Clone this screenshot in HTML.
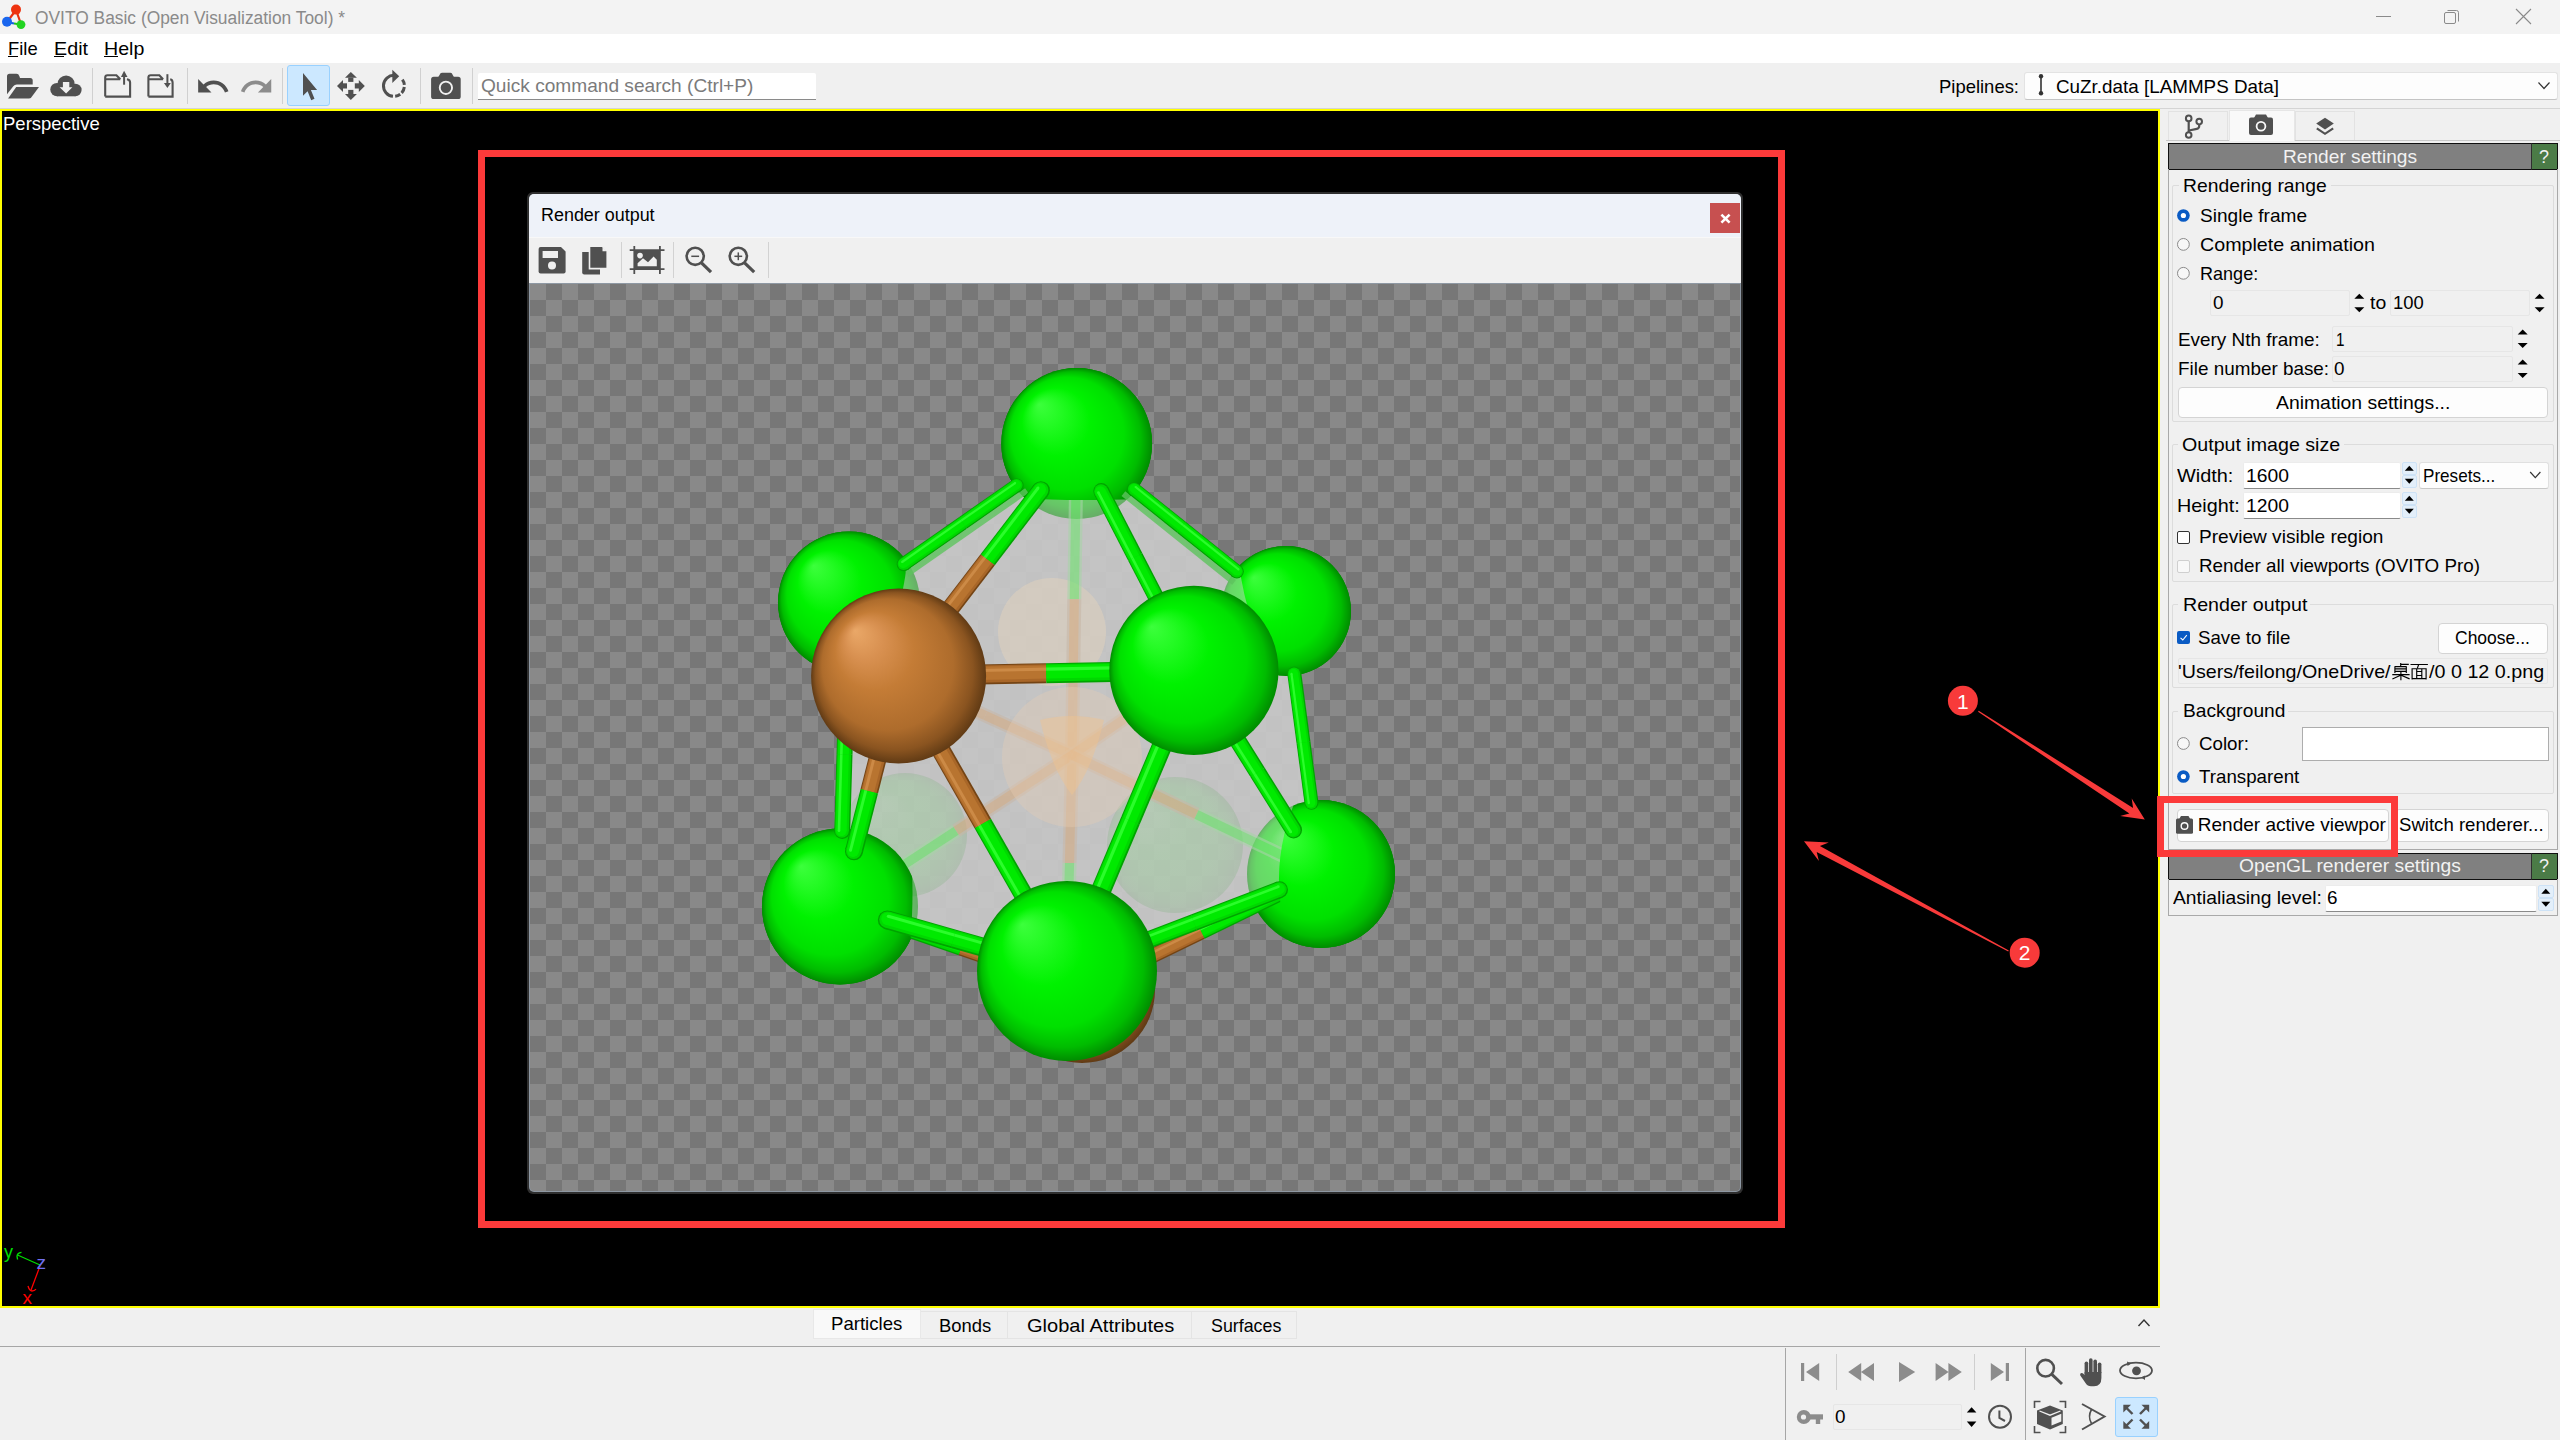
<!DOCTYPE html>
<html><head><meta charset="utf-8"><style>
html,body{margin:0;padding:0;}
body{width:2560px;height:1440px;position:relative;overflow:hidden;background:#f0f0f0;font-family:"Liberation Sans", sans-serif;}
div{box-sizing:border-box;}
svg{position:absolute;overflow:visible;}

</style></head><body>
<div style="position:absolute;left:0px;top:0px;width:2560px;height:34px;background:#f3f3f3"></div><div style="position:absolute;left:0px;top:34px;width:2560px;height:29px;background:#ffffff"></div><div style="position:absolute;left:0px;top:63px;width:2560px;height:46px;background:#f0f0f0"></div><div style="position:absolute;left:0px;top:108px;width:2560px;height:1px;background:#d4d4d4"></div><svg style="left:0px;top:0px;" width="34" height="34" viewBox="0 0 34 34">
      <line x1="16" y1="10" x2="7" y2="22" stroke="#e83010" stroke-width="2.2"/>
      <line x1="16" y1="10" x2="21" y2="24" stroke="#e83010" stroke-width="2.2"/>
      <line x1="7" y1="22" x2="14" y2="23.5" stroke="#1060e0" stroke-width="2.2"/>
      <line x1="14" y1="23.5" x2="21" y2="24.5" stroke="#20c020" stroke-width="2.2"/>
      <circle cx="16" cy="9.6" r="5" fill="#ee3310"/>
      <circle cx="7" cy="21.8" r="5" fill="#1a66ee"/>
      <circle cx="21" cy="24.6" r="4.4" fill="#22d422"/>
    </svg><div style="position:absolute;left:35.00px;top:8.56px;font-size:18px;line-height:18px;color:#8a8a8a;white-space:pre;transform:scaleX(0.9653);transform-origin:0 0;">OVITO Basic (Open Visualization Tool) *</div><svg style="left:2360px;top:0px;" width="200" height="34" viewBox="2360 0 200 34">
      <line x1="2376" y1="16.5" x2="2391" y2="16.5" stroke="#8a8a8a" stroke-width="1"/>
      <rect x="2444.5" y="12.5" width="11" height="11" rx="1.5" fill="none" stroke="#8a8a8a" stroke-width="1"/>
      <path d="M2447.5 10.5 H2456.5 Q2458.5 10.5 2458.5 12.5 V21.5" fill="none" stroke="#8a8a8a" stroke-width="1"/>
      <path d="M2516 9 L2531 24 M2531 9 L2516 24" stroke="#8a8a8a" stroke-width="1.1"/>
    </svg><div style="position:absolute;left:8.30px;top:38.82px;font-size:19px;line-height:19px;color:#000;white-space:pre;transform:scaleX(0.9665);transform-origin:0 0;">File</div><div style="position:absolute;left:54.00px;top:38.82px;font-size:19px;line-height:19px;color:#000;white-space:pre;transform:scaleX(1.0382);transform-origin:0 0;">Edit</div><div style="position:absolute;left:104.00px;top:38.82px;font-size:19px;line-height:19px;color:#000;white-space:pre;transform:scaleX(1.0313);transform-origin:0 0;">Help</div><div style="position:absolute;left:8px;top:56px;width:10px;height:1.2px;background:#000"></div><div style="position:absolute;left:54px;top:56px;width:10px;height:1.2px;background:#000"></div><div style="position:absolute;left:104px;top:56px;width:13.5px;height:1.2px;background:#000"></div><div style="position:absolute;left:92px;top:68px;width:1px;height:36px;background:#d0d0d0"></div><div style="position:absolute;left:187px;top:68px;width:1px;height:36px;background:#d0d0d0"></div><div style="position:absolute;left:282px;top:68px;width:1px;height:36px;background:#d0d0d0"></div><div style="position:absolute;left:420px;top:68px;width:1px;height:36px;background:#d0d0d0"></div><div style="position:absolute;left:472px;top:68px;width:1px;height:36px;background:#d0d0d0"></div><div style="position:absolute;left:287px;top:65px;width:43px;height:41px;background:#cce8ff;border:1px solid #99d1ff;border-radius:3px"></div><svg style="left:0px;top:60px;" width="830" height="50" viewBox="0 60 830 50">
      <!-- open folder -->
      <path d="M7 76.3 Q7 73.8 9.5 73.8 H16.5 Q18.6 73.8 19.4 76.2 L20 78.1 H30.2 Q32.7 78.1 32.7 80.6 V84.6 H16.8 Q14.6 84.6 13.3 86.3 L7 94.3 Z" fill="#505050"/>
      <path d="M16.2 86.9 H39 L31.4 97.2 Q30.4 98.5 28.8 98.5 H8.1 Z" fill="#505050"/>
      <!-- cloud download -->
      <g fill="#505050">
        <circle cx="66.1" cy="84.2" r="8.6"/>
        <circle cx="57" cy="89.6" r="6.7"/>
        <circle cx="75.4" cy="90" r="6.2"/>
        <rect x="57" y="86" width="18.5" height="10.3"/>
      </g>
      <path d="M62.9 81.9 H69.3 V87.2 H72.4 L66.1 93.5 L59.6 87.2 H62.9 Z" fill="#f0f0f0"/>
      <!-- export folder -->
      <path d="M120.3 79.2 H105.2 M105.2 96.6 V77.5 Q105.2 75.2 107.5 75.2 H116.4 L120.3 79.2 M126.9 79.2 Q130.1 79.6 130.1 82.5 V96.6 H105.2" fill="none" stroke="#505050" stroke-width="2.1"/>
      <path d="M124.1 84.7 V76" stroke="#505050" stroke-width="2"/>
      <path d="M120.9 77 L124.1 70.7 L127.5 77 Z" fill="#505050"/>
      <!-- import folder -->
      <path d="M163.1 79.2 H148.4 M148.4 96.6 V77.5 Q148.4 75.2 150.7 75.2 H159.3 L163.1 79.2 M170.2 79.2 Q172.6 79.6 172.6 82.5 V96.6 H148.4" fill="none" stroke="#505050" stroke-width="2.1"/>
      <path d="M167.4 74.2 V84" stroke="#505050" stroke-width="2"/>
      <path d="M163.9 83 H170.8 L167.4 87.9 Z" fill="#505050"/>
      <!-- undo -->
      <g transform="translate(195.2 68.7) scale(1.48)">
        <path d="M12.5 8c-2.65 0-5.05.99-6.9 2.6L2 7v9h9l-3.62-3.62c1.39-1.16 3.16-1.88 5.12-1.88 3.54 0 6.55 2.31 7.6 5.5l2.37-.78C21.08 11.03 17.15 8 12.5 8z" fill="#505050"/>
      </g>
      <!-- redo -->
      <g transform="translate(274.2 68.7) scale(-1.48 1.48)">
        <path d="M12.5 8c-2.65 0-5.05.99-6.9 2.6L2 7v9h9l-3.62-3.62c1.39-1.16 3.16-1.88 5.12-1.88 3.54 0 6.55 2.31 7.6 5.5l2.37-.78C21.08 11.03 17.15 8 12.5 8z" fill="#8c8c8c"/>
      </g>
      <!-- pointer -->
      <path d="M303 73 L303 95.8 L307.6 91.3 L311.2 100.3 L314.5 98.8 L310.9 90.1 L317.1 90.1 Z" fill="#505050"/>
      <!-- move -->
      <g fill="#505050">
        <path d="M350.8 71.9 L356.9 77.8 H345 Z"/><rect x="348.2" y="77.6" width="5.2" height="4.3"/>
        <path d="M350.8 99.9 L356.9 94 H345 Z"/><rect x="348.2" y="89.9" width="5.2" height="4.3"/>
        <path d="M337 85.9 L343 79.9 V91.9 Z"/><rect x="342.8" y="83.3" width="4.2" height="5.2"/>
        <path d="M364.8 85.9 L358.8 79.9 V91.9 Z"/><rect x="354.8" y="83.3" width="4.2" height="5.2"/>
      </g>
      <!-- rotate -->
      <path d="M392.98 96.31 A10.5 10.5 0 0 1 394.27 75.36" fill="none" stroke="#505050" stroke-width="3"/>
      <path d="M402.39 79.68 A10.5 10.5 0 0 1 404.36 84.93 M404.33 87.04 A10.5 10.5 0 0 1 401.70 92.88 M400.22 94.24 A10.5 10.5 0 0 1 395.18 96.27" fill="none" stroke="#505050" stroke-width="3"/>
      <path d="M392.3 69.7 L399.2 76.3 L392.3 82.9 Z" fill="#505050"/>
      <!-- camera -->
      <rect x="431.1" y="76.8" width="29.6" height="22.2" rx="2.6" fill="#505050"/>
      <path d="M438 77.5 L440.5 73.2 Q441 72.8 442 72.8 H450.5 Q451.4 72.8 451.8 73.2 L454.2 77.5 Z" fill="#505050"/>
      <circle cx="445.9" cy="87.8" r="6.15" fill="none" stroke="#f0f0f0" stroke-width="1.9"/>
    </svg><div style="position:absolute;left:478px;top:73px;width:338px;height:27px;background:#ffffff;border-bottom:1px solid #8a8a8a;border-radius:2px 2px 0 0"></div><div style="position:absolute;left:481.00px;top:76.32px;font-size:19px;line-height:19px;color:#7b7b7b;white-space:pre;transform:scaleX(1.0058);transform-origin:0 0;">Quick command search (Ctrl+P)</div><div style="position:absolute;left:1938.70px;top:76.72px;font-size:19px;line-height:19px;color:#000;white-space:pre;transform:scaleX(0.9710);transform-origin:0 0;">Pipelines:</div><div style="position:absolute;left:2024px;top:72px;width:534px;height:28px;background:#fdfdfd;border:1px solid #e3e3e3;border-bottom-color:#c4c4c4;border-radius:3px"></div><svg style="left:2030px;top:70px;" width="30" height="30" viewBox="2030 70 30 30">
      <line x1="2041" y1="76.5" x2="2041" y2="93" stroke="#333" stroke-width="1.6"/>
      <circle cx="2041" cy="76.3" r="2.2" fill="#333"/><circle cx="2041" cy="93.2" r="2.2" fill="#333"/>
    </svg><div style="position:absolute;left:2056.00px;top:76.72px;font-size:19px;line-height:19px;color:#000;white-space:pre;transform:scaleX(0.9915);transform-origin:0 0;">CuZr.data [LAMMPS Data]</div><svg style="left:2530px;top:75px;" width="25" height="20" viewBox="2530 75 25 20"><path d="M2538.5 82.5 L2544 88.5 L2549.5 82.5" fill="none" stroke="#333" stroke-width="1.2"/></svg><div style="position:absolute;left:0px;top:109px;width:2160px;height:1199px;background:#000;border:2px solid #ffff00"></div><div style="position:absolute;left:3.40px;top:114.12px;font-size:19px;line-height:19px;color:#ffffff;white-space:pre;transform:scaleX(0.9740);transform-origin:0 0;">Perspective</div><svg style="left:0px;top:1240px;" width="60" height="68" viewBox="0 1240 60 68">
      <line x1="40" y1="1265" x2="17.5" y2="1255" stroke="#00e000" stroke-width="1.3"/>
      <path d="M21.5 1252.3 Q17 1253 17 1256.5 L17.6 1259.5" fill="none" stroke="#00e000" stroke-width="1.3"/>
      <line x1="40" y1="1266" x2="31" y2="1290" stroke="#ff0000" stroke-width="1.3"/>
      <path d="M28 1286 Q29.5 1291 32 1291 Q34.5 1291 36 1289.2" fill="none" stroke="#ff0000" stroke-width="1.3"/>
      <text x="4" y="1258" font-family="Liberation Sans" font-size="18" fill="#00e000">y</text>
      <text x="36.6" y="1269.3" font-family="Liberation Sans" font-size="19" fill="#7070f0">z</text>
      <text x="22.6" y="1304" font-family="Liberation Sans" font-size="19" fill="#ff0000">x</text>
    </svg><div style="position:absolute;left:478px;top:150px;width:1307px;height:1078px;border:7px solid #fc3a3a"></div><div style="position:absolute;left:527px;top:192px;width:1216px;height:1002px;background:#2f2f2f;border-radius:6px"></div><div style="position:absolute;left:529px;top:194px;width:1212px;height:998px;background:#8e98a3;border-radius:5px"></div><div style="position:absolute;left:529px;top:194px;width:1212px;height:43px;background:#eef2f9;border-radius:5px 5px 0 0"></div><div style="position:absolute;left:529px;top:237px;width:1212px;height:1px;background:#f8f8f8"></div><div style="position:absolute;left:529px;top:238px;width:1212px;height:45px;background:#f0f0f0"></div><div style="position:absolute;left:541.00px;top:205.76px;font-size:18px;line-height:18px;color:#000;white-space:pre;transform:scaleX(0.9957);transform-origin:0 0;">Render output</div><div style="position:absolute;left:1710px;top:203px;width:30px;height:30px;background:#c75050"></div><svg style="left:1715px;top:208px;" width="20" height="20" viewBox="1715 208 20 20"><path d="M1721.4 214.6 L1729.6 222.6 M1729.6 214.6 L1721.4 222.6" stroke="#fff" stroke-width="2.6"/></svg><div style="position:absolute;left:621px;top:242px;width:1px;height:36px;background:#d2d2d2"></div><div style="position:absolute;left:673px;top:242px;width:1px;height:36px;background:#d2d2d2"></div><div style="position:absolute;left:768px;top:242px;width:1px;height:36px;background:#d2d2d2"></div><svg style="left:530px;top:240px;" width="240" height="40" viewBox="530 240 240 40">
      <!-- save -->
      <path d="M540.6 247 H561 L565.6 251.6 V271.5 Q565.6 273.5 563.6 273.5 H540.6 Q538.6 273.5 538.6 271.5 V249 Q538.6 247 540.6 247 Z" fill="#505050"/>
      <rect x="542.6" y="251" width="15.4" height="7" fill="#f0f0f0"/>
      <circle cx="552" cy="265.5" r="4" fill="#f0f0f0"/>
      <!-- copy -->
      <path d="M582.2 252 H600 V274.4 H584.2 Q582.2 274.4 582.2 272.4 Z" fill="#505050"/>
      <path d="M589.5 246.3 H602.5 L607.2 251 V268.6 H589.5 Z" fill="#505050" stroke="#f0f0f0" stroke-width="1.6"/>
      <path d="M602.5 246.8 V251.2 H606.8" fill="#f0f0f0"/>
      <!-- fit -->
      <g stroke="#505050" stroke-width="1.8">
        <line x1="629.7" y1="250.2" x2="664.5" y2="250.2"/>
        <line x1="629.7" y1="269.2" x2="664.5" y2="269.2"/>
        <line x1="634.3" y1="246" x2="634.3" y2="274"/>
        <line x1="659.9" y1="246" x2="659.9" y2="274"/>
      </g>
      <rect x="634.3" y="250.2" width="25.6" height="19" fill="#505050"/>
      <circle cx="640" cy="255.6" r="2.8" fill="#f0f0f0"/>
      <path d="M637.6 266.2 L637.6 263.2 L643 258.3 L648 262.2 L653.6 256.6 L656.8 259.8 L656.8 266.2 Z" fill="#f0f0f0"/>
      <!-- zoom out -->
      <circle cx="695.2" cy="256.3" r="8.6" fill="none" stroke="#505050" stroke-width="2.6"/>
      <line x1="701.5" y1="262.8" x2="711" y2="272.2" stroke="#505050" stroke-width="3.2"/>
      <line x1="691.3" y1="256.3" x2="699.1" y2="256.3" stroke="#505050" stroke-width="1.5"/>
      <!-- zoom in -->
      <circle cx="738.3" cy="256.3" r="8.6" fill="none" stroke="#505050" stroke-width="2.6"/>
      <line x1="744.6" y1="262.8" x2="754.2" y2="272.2" stroke="#505050" stroke-width="3.2"/>
      <line x1="734.4" y1="256.3" x2="742.2" y2="256.3" stroke="#505050" stroke-width="1.5"/>
      <line x1="738.3" y1="252.4" x2="738.3" y2="260.2" stroke="#505050" stroke-width="1.5"/>
    </svg><svg style="left:530px;top:284px" width="1210" height="907" shape-rendering="crispEdges">
      <defs><pattern id="chk" x="0" y="0" width="32" height="32" patternUnits="userSpaceOnUse">
        <rect width="32" height="32" fill="#777777"/>
        <rect width="16" height="16" fill="#898989"/><rect x="16" y="16" width="16" height="16" fill="#898989"/>
      </pattern>
      <clipPath id="dlgclip"><path d="M0 0 H1210 V903 Q1210 907 1206 907 H4 Q0 907 0 903 Z"/></clipPath>
      </defs>
      <rect width="1210" height="907" fill="url(#chk)" clip-path="url(#dlgclip)"/>
    </svg><svg style="left:530px;top:284px" width="1210" height="907" viewBox="530 284 1210 907"><defs>
      <radialGradient id="gG" cx="0.5" cy="0.5" r="0.5" fx="0.25" fy="0.24">
        <stop offset="0" stop-color="#3cff3c"/>
        <stop offset="0.2" stop-color="#22fa22"/>
        <stop offset="0.45" stop-color="#00f200"/>
        <stop offset="0.75" stop-color="#00e000"/>
        <stop offset="0.9" stop-color="#00bc00"/>
        <stop offset="1" stop-color="#008c00"/>
      </radialGradient>
      <radialGradient id="gB" cx="0.5" cy="0.5" r="0.5" fx="0.25" fy="0.24">
        <stop offset="0" stop-color="#eaa868"/>
        <stop offset="0.22" stop-color="#d89050"/>
        <stop offset="0.45" stop-color="#c47c36"/>
        <stop offset="0.75" stop-color="#ae6c2c"/>
        <stop offset="0.9" stop-color="#8a5420"/>
        <stop offset="1" stop-color="#603a14"/>
      </radialGradient>
      <linearGradient id="gBond" x1="0" y1="0" x2="0" y2="1"><stop offset="0" stop-color="#00ff00"/><stop offset="1" stop-color="#00c000"/></linearGradient>
      <clipPath id="capTop"><path d="M990 360 H1170 V497 Q1150 500 1076 500 Q1010 500 990 488 Z"/></clipPath>
      <clipPath id="capUL"><path d="M770 520 H903 Q912 560 900 600 Q880 660 770 700 Z"/></clipPath>
      <clipPath id="capUR"><path d="M1236 540 H1360 V690 H1290 Q1245 640 1236 540 Z"/></clipPath>
      <clipPath id="capBR"><path d="M1300 790 H1400 V960 H1296 Q1260 875 1300 790 Z"/></clipPath>
      <clipPath id="capBL"><path d="M755 820 H905 Q920 880 905 990 H755 Z"/></clipPath>
    </defs><g><circle cx="849" cy="602.5" r="71" fill="url(#gG)"/></g><g><circle cx="1286" cy="611" r="65" fill="url(#gG)"/></g><g><circle cx="1076.7" cy="443.5" r="75.4" fill="url(#gG)"/></g><g><circle cx="1321" cy="874" r="74" fill="url(#gG)"/></g><g><circle cx="840" cy="906.5" r="78" fill="url(#gG)"/></g><polygon points="1076.7,443.5 1286,611 1321,874 1067,971 840,906.5 849,602.5" fill="#cecece" fill-opacity="0.86" stroke="#cecece" stroke-opacity="0.86" stroke-width="6" stroke-linejoin="round"/><g opacity="0.42"><circle cx="849" cy="602.5" r="71" fill="url(#gG)"/></g><g opacity="0.42"><circle cx="1286" cy="611" r="65" fill="url(#gG)"/></g><g opacity="0.42"><circle cx="1076.7" cy="443.5" r="75.4" fill="url(#gG)"/></g><g opacity="0.42"><circle cx="1321" cy="874" r="74" fill="url(#gG)"/></g><g opacity="0.42"><circle cx="840" cy="906.5" r="78" fill="url(#gG)"/></g><circle cx="1052" cy="632" r="54" fill="#ecd6bc" opacity="0.4"/><g opacity="0.1"><circle cx="905" cy="835" r="62" fill="url(#gG)"/></g><g opacity="0.1"><circle cx="1175" cy="845" r="68" fill="url(#gG)"/></g><g opacity="0.6"><line x1="1076.7" y1="443.5" x2="1074.3" y2="599.2" stroke="#a8d4a8" stroke-width="14.0"/><line x1="1074.3" y1="599.2" x2="1072.0" y2="755.0" stroke="#c8b8a8" stroke-width="14.0"/><line x1="1076.7" y1="443.5" x2="1074.3" y2="599.2" stroke="#6ee46e" stroke-width="9.2"/><line x1="1074.3" y1="599.2" x2="1072.0" y2="755.0" stroke="#d4aa80" stroke-width="9.2"/></g><g opacity="0.6"><line x1="1072.0" y1="755.0" x2="985.3" y2="715.5" stroke="#c8b8a8" stroke-width="14.0"/><line x1="985.3" y1="715.5" x2="898.6" y2="676.0" stroke="#c8b8a8" stroke-width="14.0"/><line x1="1072.0" y1="755.0" x2="985.3" y2="715.5" stroke="#d4aa80" stroke-width="9.2"/><line x1="985.3" y1="715.5" x2="898.6" y2="676.0" stroke="#d4aa80" stroke-width="9.2"/></g><g opacity="0.6"><line x1="1072.0" y1="755.0" x2="1133.0" y2="712.7" stroke="#c8b8a8" stroke-width="14.0"/><line x1="1133.0" y1="712.7" x2="1193.9" y2="670.4" stroke="#a8d4a8" stroke-width="14.0"/><line x1="1072.0" y1="755.0" x2="1133.0" y2="712.7" stroke="#d4aa80" stroke-width="9.2"/><line x1="1133.0" y1="712.7" x2="1193.9" y2="670.4" stroke="#6ee46e" stroke-width="9.2"/></g><g opacity="0.6"><line x1="1072.0" y1="755.0" x2="1069.5" y2="863.0" stroke="#c8b8a8" stroke-width="14.0"/><line x1="1069.5" y1="863.0" x2="1067.0" y2="971.0" stroke="#a8d4a8" stroke-width="14.0"/><line x1="1072.0" y1="755.0" x2="1069.5" y2="863.0" stroke="#d4aa80" stroke-width="9.2"/><line x1="1069.5" y1="863.0" x2="1067.0" y2="971.0" stroke="#6ee46e" stroke-width="9.2"/></g><g opacity="0.6"><line x1="1072.0" y1="755.0" x2="956.0" y2="830.8" stroke="#c8b8a8" stroke-width="14.0"/><line x1="956.0" y1="830.8" x2="840.0" y2="906.5" stroke="#a8d4a8" stroke-width="14.0"/><line x1="1072.0" y1="755.0" x2="956.0" y2="830.8" stroke="#d4aa80" stroke-width="9.2"/><line x1="956.0" y1="830.8" x2="840.0" y2="906.5" stroke="#6ee46e" stroke-width="9.2"/></g><g opacity="0.6"><line x1="1072.0" y1="755.0" x2="1196.5" y2="814.5" stroke="#c8b8a8" stroke-width="14.0"/><line x1="1196.5" y1="814.5" x2="1321.0" y2="874.0" stroke="#a8d4a8" stroke-width="14.0"/><line x1="1072.0" y1="755.0" x2="1196.5" y2="814.5" stroke="#d4aa80" stroke-width="9.2"/><line x1="1196.5" y1="814.5" x2="1321.0" y2="874.0" stroke="#6ee46e" stroke-width="9.2"/></g><circle cx="1072" cy="757" r="70" fill="#e8cfb4" opacity="0.35"/><path d="M1040 720 Q1072 712 1104 720 Q1092 770 1072 795 Q1052 770 1040 720 Z" fill="#f0c490" opacity="0.45"/><g><line x1="1082.0" y1="990.0" x2="1201.5" y2="932.0" stroke="#744414" stroke-width="15.0"/><line x1="1201.5" y1="932.0" x2="1321.0" y2="874.0" stroke="#00a400" stroke-width="15.0"/><line x1="1081.9" y1="989.7" x2="1201.4" y2="931.7" stroke="#a86628" stroke-width="12.9"/><line x1="1201.4" y1="931.7" x2="1320.9" y2="873.7" stroke="#00d800" stroke-width="12.9"/><line x1="1081.6" y1="989.2" x2="1201.1" y2="931.2" stroke="#b87430" stroke-width="9.9"/><line x1="1201.1" y1="931.2" x2="1320.6" y2="873.2" stroke="#00ea00" stroke-width="9.9"/><line x1="1080.7" y1="987.3" x2="1200.2" y2="929.3" stroke="#cc8a46" stroke-width="2.4"/><line x1="1200.2" y1="929.3" x2="1319.7" y2="871.3" stroke="#2cfc2c" stroke-width="2.4"/></g><g><line x1="1082.0" y1="990.0" x2="961.0" y2="948.2" stroke="#744414" stroke-width="15.0"/><line x1="961.0" y1="948.2" x2="840.0" y2="906.5" stroke="#00a400" stroke-width="15.0"/><line x1="1082.1" y1="989.7" x2="961.1" y2="948.0" stroke="#a86628" stroke-width="12.9"/><line x1="961.1" y1="948.0" x2="840.1" y2="906.2" stroke="#00d800" stroke-width="12.9"/><line x1="1082.3" y1="989.1" x2="961.3" y2="947.4" stroke="#b87430" stroke-width="9.9"/><line x1="961.3" y1="947.4" x2="840.3" y2="905.6" stroke="#00ea00" stroke-width="9.9"/><line x1="1083.0" y1="987.2" x2="962.0" y2="945.4" stroke="#cc8a46" stroke-width="2.4"/><line x1="962.0" y1="945.4" x2="841.0" y2="903.7" stroke="#2cfc2c" stroke-width="2.4"/></g><g clip-path="url(#capTop)"><circle cx="1076.7" cy="443.5" r="75.4" fill="url(#gG)"/></g><g clip-path="url(#capUL)"><circle cx="849" cy="602.5" r="71" fill="url(#gG)"/></g><g clip-path="url(#capUR)"><circle cx="1286" cy="611" r="65" fill="url(#gG)"/></g><g clip-path="url(#capBR)"><circle cx="1321" cy="874" r="74" fill="url(#gG)"/></g><g clip-path="url(#capBL)"><circle cx="840" cy="906.5" r="78" fill="url(#gG)"/></g><line x1="1026.8" y1="490.6" x2="907.1" y2="574.1" stroke="#5ec45e" stroke-width="6" opacity="0.8"/><line x1="1123.4" y1="493.7" x2="1234.1" y2="582.3" stroke="#5ec45e" stroke-width="6" opacity="0.8"/><g><line x1="1016.7" y1="485.4" x2="962.9" y2="523.0" stroke="#00a400" stroke-width="14.0"/><circle cx="1016.7" cy="485.4" r="7.0" fill="#00a400"/><line x1="962.9" y1="523.0" x2="903.7" y2="564.3" stroke="#00a400" stroke-width="14.0"/><circle cx="903.7" cy="564.3" r="7.0" fill="#00a400"/><line x1="1016.6" y1="485.1" x2="962.7" y2="522.8" stroke="#00d800" stroke-width="12.0"/><circle cx="1016.6" cy="485.1" r="6.0" fill="#00d800"/><line x1="962.7" y1="522.8" x2="903.6" y2="564.1" stroke="#00d800" stroke-width="12.0"/><circle cx="903.6" cy="564.1" r="6.0" fill="#00d800"/><line x1="1016.3" y1="484.7" x2="962.4" y2="522.3" stroke="#00ea00" stroke-width="9.2"/><circle cx="1016.3" cy="484.7" r="4.6" fill="#00ea00"/><line x1="962.4" y1="522.3" x2="903.2" y2="563.6" stroke="#00ea00" stroke-width="9.2"/><circle cx="903.2" cy="563.6" r="4.6" fill="#00ea00"/><line x1="1015.1" y1="483.1" x2="961.2" y2="520.7" stroke="#2cfc2c" stroke-width="2.2"/><circle cx="1015.1" cy="483.1" r="1.1" fill="#2cfc2c"/><line x1="961.2" y1="520.7" x2="902.1" y2="562.0" stroke="#2cfc2c" stroke-width="2.2"/><circle cx="902.1" cy="562.0" r="1.1" fill="#2cfc2c"/></g><g><line x1="1133.8" y1="489.2" x2="1181.3" y2="527.2" stroke="#00a400" stroke-width="14.0"/><circle cx="1133.8" cy="489.2" r="7.0" fill="#00a400"/><line x1="1181.3" y1="527.2" x2="1236.8" y2="571.6" stroke="#00a400" stroke-width="14.0"/><circle cx="1236.8" cy="571.6" r="7.0" fill="#00a400"/><line x1="1134.0" y1="489.0" x2="1181.5" y2="527.0" stroke="#00d800" stroke-width="12.0"/><circle cx="1134.0" cy="489.0" r="6.0" fill="#00d800"/><line x1="1181.5" y1="527.0" x2="1236.9" y2="571.4" stroke="#00d800" stroke-width="12.0"/><circle cx="1236.9" cy="571.4" r="6.0" fill="#00d800"/><line x1="1134.3" y1="488.5" x2="1181.9" y2="526.6" stroke="#00ea00" stroke-width="9.2"/><circle cx="1134.3" cy="488.5" r="4.6" fill="#00ea00"/><line x1="1181.9" y1="526.6" x2="1237.3" y2="570.9" stroke="#00ea00" stroke-width="9.2"/><circle cx="1237.3" cy="570.9" r="4.6" fill="#00ea00"/><line x1="1135.6" y1="487.0" x2="1183.1" y2="525.1" stroke="#2cfc2c" stroke-width="2.2"/><circle cx="1135.6" cy="487.0" r="1.1" fill="#2cfc2c"/><line x1="1183.1" y1="525.1" x2="1238.5" y2="569.4" stroke="#2cfc2c" stroke-width="2.2"/><circle cx="1238.5" cy="569.4" r="1.1" fill="#2cfc2c"/></g><g><line x1="1040.9" y1="490.2" x2="987.7" y2="559.8" stroke="#00a400" stroke-width="18.0"/><circle cx="1040.9" cy="490.2" r="9.0" fill="#00a400"/><line x1="987.7" y1="559.8" x2="898.6" y2="676.0" stroke="#744414" stroke-width="18.0"/><line x1="1040.7" y1="490.0" x2="987.4" y2="559.5" stroke="#00d800" stroke-width="15.5"/><circle cx="1040.7" cy="490.0" r="7.7" fill="#00d800"/><line x1="987.4" y1="559.5" x2="898.3" y2="675.8" stroke="#a86628" stroke-width="15.5"/><line x1="1040.1" y1="489.5" x2="986.8" y2="559.1" stroke="#00ea00" stroke-width="11.9"/><circle cx="1040.1" cy="489.5" r="5.9" fill="#00ea00"/><line x1="986.8" y1="559.1" x2="897.7" y2="675.3" stroke="#b87430" stroke-width="11.9"/><line x1="1038.1" y1="488.0" x2="984.8" y2="557.6" stroke="#2cfc2c" stroke-width="2.9"/><circle cx="1038.1" cy="488.0" r="1.4" fill="#2cfc2c"/><line x1="984.8" y1="557.6" x2="895.7" y2="673.8" stroke="#cc8a46" stroke-width="2.9"/></g><g><line x1="1101.3" y1="491.1" x2="1135.3" y2="557.0" stroke="#00a400" stroke-width="16.0"/><circle cx="1101.3" cy="491.1" r="8.0" fill="#00a400"/><line x1="1135.3" y1="557.0" x2="1193.9" y2="670.4" stroke="#00a400" stroke-width="16.0"/><line x1="1101.0" y1="491.2" x2="1135.0" y2="557.1" stroke="#00d800" stroke-width="13.8"/><circle cx="1101.0" cy="491.2" r="6.9" fill="#00d800"/><line x1="1135.0" y1="557.1" x2="1193.6" y2="670.5" stroke="#00d800" stroke-width="13.8"/><line x1="1100.4" y1="491.5" x2="1134.4" y2="557.4" stroke="#00ea00" stroke-width="10.6"/><circle cx="1100.4" cy="491.5" r="5.3" fill="#00ea00"/><line x1="1134.4" y1="557.4" x2="1193.0" y2="670.8" stroke="#00ea00" stroke-width="10.6"/><line x1="1098.4" y1="492.5" x2="1132.5" y2="558.4" stroke="#2cfc2c" stroke-width="2.6"/><circle cx="1098.4" cy="492.5" r="1.3" fill="#2cfc2c"/><line x1="1132.5" y1="558.4" x2="1191.1" y2="671.9" stroke="#2cfc2c" stroke-width="2.6"/></g><g><line x1="847.0" y1="671.3" x2="844.5" y2="754.5" stroke="#00a400" stroke-width="16.0"/><circle cx="847.0" cy="671.3" r="8.0" fill="#00a400"/><line x1="844.5" y1="754.5" x2="842.2" y2="830.9" stroke="#00a400" stroke-width="16.0"/><circle cx="842.2" cy="830.9" r="8.0" fill="#00a400"/><line x1="846.6" y1="671.3" x2="844.2" y2="754.5" stroke="#00d800" stroke-width="13.8"/><circle cx="846.6" cy="671.3" r="6.9" fill="#00d800"/><line x1="844.2" y1="754.5" x2="841.9" y2="830.9" stroke="#00d800" stroke-width="13.8"/><circle cx="841.9" cy="830.9" r="6.9" fill="#00d800"/><line x1="846.0" y1="671.3" x2="843.5" y2="754.5" stroke="#00ea00" stroke-width="10.6"/><circle cx="846.0" cy="671.3" r="5.3" fill="#00ea00"/><line x1="843.5" y1="754.5" x2="841.3" y2="830.8" stroke="#00ea00" stroke-width="10.6"/><circle cx="841.3" cy="830.8" r="5.3" fill="#00ea00"/><line x1="843.8" y1="671.2" x2="841.3" y2="754.4" stroke="#2cfc2c" stroke-width="2.6"/><circle cx="843.8" cy="671.2" r="1.3" fill="#2cfc2c"/><line x1="841.3" y1="754.4" x2="839.0" y2="830.8" stroke="#2cfc2c" stroke-width="2.6"/><circle cx="839.0" cy="830.8" r="1.3" fill="#2cfc2c"/></g><g><line x1="1294.3" y1="673.5" x2="1303.5" y2="742.5" stroke="#00a400" stroke-width="14.0"/><circle cx="1294.3" cy="673.5" r="7.0" fill="#00a400"/><line x1="1303.5" y1="742.5" x2="1311.5" y2="802.8" stroke="#00a400" stroke-width="14.0"/><circle cx="1311.5" cy="802.8" r="7.0" fill="#00a400"/><line x1="1294.0" y1="673.5" x2="1303.2" y2="742.5" stroke="#00d800" stroke-width="12.0"/><circle cx="1294.0" cy="673.5" r="6.0" fill="#00d800"/><line x1="1303.2" y1="742.5" x2="1311.3" y2="802.9" stroke="#00d800" stroke-width="12.0"/><circle cx="1311.3" cy="802.9" r="6.0" fill="#00d800"/><line x1="1293.5" y1="673.6" x2="1302.7" y2="742.6" stroke="#00ea00" stroke-width="9.2"/><circle cx="1293.5" cy="673.6" r="4.6" fill="#00ea00"/><line x1="1302.7" y1="742.6" x2="1310.7" y2="803.0" stroke="#00ea00" stroke-width="9.2"/><circle cx="1310.7" cy="803.0" r="4.6" fill="#00ea00"/><line x1="1291.5" y1="673.9" x2="1300.7" y2="742.9" stroke="#2cfc2c" stroke-width="2.2"/><circle cx="1291.5" cy="673.9" r="1.1" fill="#2cfc2c"/><line x1="1300.7" y1="742.9" x2="1308.8" y2="803.2" stroke="#2cfc2c" stroke-width="2.2"/><circle cx="1308.8" cy="803.2" r="1.1" fill="#2cfc2c"/></g><g><line x1="898.6" y1="676.0" x2="869.3" y2="791.2" stroke="#744414" stroke-width="18.0"/><line x1="869.3" y1="791.2" x2="854.0" y2="851.3" stroke="#00a400" stroke-width="18.0"/><circle cx="854.0" cy="851.3" r="9.0" fill="#00a400"/><line x1="898.3" y1="675.9" x2="869.0" y2="791.2" stroke="#a86628" stroke-width="15.5"/><line x1="869.0" y1="791.2" x2="853.7" y2="851.2" stroke="#00d800" stroke-width="15.5"/><circle cx="853.7" cy="851.2" r="7.7" fill="#00d800"/><line x1="897.6" y1="675.7" x2="868.3" y2="791.0" stroke="#b87430" stroke-width="11.9"/><line x1="868.3" y1="791.0" x2="853.0" y2="851.0" stroke="#00ea00" stroke-width="11.9"/><circle cx="853.0" cy="851.0" r="5.9" fill="#00ea00"/><line x1="895.1" y1="675.1" x2="865.8" y2="790.4" stroke="#cc8a46" stroke-width="2.9"/><line x1="865.8" y1="790.4" x2="850.5" y2="850.4" stroke="#2cfc2c" stroke-width="2.9"/><circle cx="850.5" cy="850.4" r="1.4" fill="#2cfc2c"/></g><g><line x1="1193.9" y1="670.4" x2="1257.5" y2="772.2" stroke="#00a400" stroke-width="17.0"/><line x1="1257.5" y1="772.2" x2="1293.6" y2="830.1" stroke="#00a400" stroke-width="17.0"/><circle cx="1293.6" cy="830.1" r="8.5" fill="#00a400"/><line x1="1193.6" y1="670.6" x2="1257.2" y2="772.4" stroke="#00d800" stroke-width="14.6"/><line x1="1257.2" y1="772.4" x2="1293.3" y2="830.2" stroke="#00d800" stroke-width="14.6"/><circle cx="1293.3" cy="830.2" r="7.3" fill="#00d800"/><line x1="1193.0" y1="670.9" x2="1256.6" y2="772.7" stroke="#00ea00" stroke-width="11.2"/><line x1="1256.6" y1="772.7" x2="1292.7" y2="830.6" stroke="#00ea00" stroke-width="11.2"/><circle cx="1292.7" cy="830.6" r="5.6" fill="#00ea00"/><line x1="1191.0" y1="672.2" x2="1254.6" y2="774.0" stroke="#2cfc2c" stroke-width="2.7"/><line x1="1254.6" y1="774.0" x2="1290.7" y2="831.9" stroke="#2cfc2c" stroke-width="2.7"/><circle cx="1290.7" cy="831.9" r="1.4" fill="#2cfc2c"/></g><g><line x1="887.3" y1="919.9" x2="953.5" y2="938.8" stroke="#00a400" stroke-width="19.0"/><circle cx="887.3" cy="919.9" r="9.5" fill="#00a400"/><line x1="953.5" y1="938.8" x2="1067.0" y2="971.0" stroke="#00a400" stroke-width="19.0"/><line x1="887.4" y1="919.6" x2="953.6" y2="938.4" stroke="#00d800" stroke-width="16.3"/><circle cx="887.4" cy="919.6" r="8.2" fill="#00d800"/><line x1="953.6" y1="938.4" x2="1067.1" y2="970.6" stroke="#00d800" stroke-width="16.3"/><line x1="887.6" y1="918.8" x2="953.8" y2="937.7" stroke="#00ea00" stroke-width="12.5"/><circle cx="887.6" cy="918.8" r="6.3" fill="#00ea00"/><line x1="953.8" y1="937.7" x2="1067.3" y2="969.9" stroke="#00ea00" stroke-width="12.5"/><line x1="888.3" y1="916.3" x2="954.5" y2="935.1" stroke="#2cfc2c" stroke-width="3.0"/><circle cx="888.3" cy="916.3" r="1.5" fill="#2cfc2c"/><line x1="954.5" y1="935.1" x2="1068.0" y2="967.3" stroke="#2cfc2c" stroke-width="3.0"/></g><g><line x1="1067.0" y1="971.0" x2="1194.0" y2="922.5" stroke="#00a400" stroke-width="17.0"/><line x1="1194.0" y1="922.5" x2="1279.5" y2="889.8" stroke="#00a400" stroke-width="17.0"/><circle cx="1279.5" cy="889.8" r="8.5" fill="#00a400"/><line x1="1066.9" y1="970.7" x2="1193.9" y2="922.2" stroke="#00d800" stroke-width="14.6"/><line x1="1193.9" y1="922.2" x2="1279.4" y2="889.5" stroke="#00d800" stroke-width="14.6"/><circle cx="1279.4" cy="889.5" r="7.3" fill="#00d800"/><line x1="1066.6" y1="970.0" x2="1193.6" y2="921.5" stroke="#00ea00" stroke-width="11.2"/><line x1="1193.6" y1="921.5" x2="1279.2" y2="888.9" stroke="#00ea00" stroke-width="11.2"/><circle cx="1279.2" cy="888.9" r="5.6" fill="#00ea00"/><line x1="1065.8" y1="967.8" x2="1192.8" y2="919.3" stroke="#2cfc2c" stroke-width="2.7"/><line x1="1192.8" y1="919.3" x2="1278.3" y2="886.7" stroke="#2cfc2c" stroke-width="2.7"/><circle cx="1278.3" cy="886.7" r="1.4" fill="#2cfc2c"/></g><g><line x1="898.6" y1="676.0" x2="1046.2" y2="673.2" stroke="#744414" stroke-width="20.0"/><line x1="1046.2" y1="673.2" x2="1193.9" y2="670.4" stroke="#00a400" stroke-width="20.0"/><line x1="898.6" y1="675.6" x2="1046.2" y2="672.8" stroke="#a86628" stroke-width="17.2"/><line x1="1046.2" y1="672.8" x2="1193.9" y2="670.0" stroke="#00d800" stroke-width="17.2"/><line x1="898.6" y1="674.8" x2="1046.2" y2="672.0" stroke="#b87430" stroke-width="13.2"/><line x1="1046.2" y1="672.0" x2="1193.9" y2="669.2" stroke="#00ea00" stroke-width="13.2"/><line x1="898.5" y1="672.0" x2="1046.2" y2="669.2" stroke="#cc8a46" stroke-width="3.2"/><line x1="1046.2" y1="669.2" x2="1193.8" y2="666.4" stroke="#2cfc2c" stroke-width="3.2"/></g><g><line x1="898.6" y1="676.0" x2="982.8" y2="823.5" stroke="#744414" stroke-width="19.0"/><line x1="982.8" y1="823.5" x2="1067.0" y2="971.0" stroke="#00a400" stroke-width="19.0"/><line x1="898.3" y1="676.2" x2="982.5" y2="823.7" stroke="#a86628" stroke-width="16.3"/><line x1="982.5" y1="823.7" x2="1066.7" y2="971.2" stroke="#00d800" stroke-width="16.3"/><line x1="897.6" y1="676.6" x2="981.8" y2="824.1" stroke="#b87430" stroke-width="12.5"/><line x1="981.8" y1="824.1" x2="1066.0" y2="971.6" stroke="#00ea00" stroke-width="12.5"/><line x1="895.3" y1="677.9" x2="979.5" y2="825.4" stroke="#cc8a46" stroke-width="3.0"/><line x1="979.5" y1="825.4" x2="1063.7" y2="972.9" stroke="#2cfc2c" stroke-width="3.0"/></g><g><line x1="1193.9" y1="670.4" x2="1130.5" y2="820.7" stroke="#00a400" stroke-width="20.0"/><line x1="1130.5" y1="820.7" x2="1067.0" y2="971.0" stroke="#00a400" stroke-width="20.0"/><line x1="1193.5" y1="670.2" x2="1130.1" y2="820.5" stroke="#00d800" stroke-width="17.2"/><line x1="1130.1" y1="820.5" x2="1066.6" y2="970.8" stroke="#00d800" stroke-width="17.2"/><line x1="1192.8" y1="669.9" x2="1129.3" y2="820.2" stroke="#00ea00" stroke-width="13.2"/><line x1="1129.3" y1="820.2" x2="1065.9" y2="970.5" stroke="#00ea00" stroke-width="13.2"/><line x1="1190.2" y1="668.8" x2="1126.8" y2="819.1" stroke="#2cfc2c" stroke-width="3.2"/><line x1="1126.8" y1="819.1" x2="1063.3" y2="969.4" stroke="#2cfc2c" stroke-width="3.2"/></g><g><circle cx="1082" cy="990" r="73" fill="url(#gB)"/></g><g><circle cx="1067" cy="971" r="90" fill="url(#gG)"/></g><g><circle cx="1193.9" cy="670.4" r="84.6" fill="url(#gG)"/></g><g><circle cx="898.6" cy="676" r="87.5" fill="url(#gB)"/></g></svg><div style="position:absolute;left:2166px;top:140px;width:394px;height:1px;background:#c8c8c8"></div><div style="position:absolute;left:2168px;top:111px;width:60px;height:29px;background:#f0f0f0;border:1px solid #e2e2e2;border-bottom:none"></div><div style="position:absolute;left:2229px;top:110px;width:66px;height:31px;background:#f9f9f9;border:1px solid #e6e6e6;border-bottom:none"></div><div style="position:absolute;left:2295px;top:111px;width:60px;height:29px;background:#f0f0f0;border:1px solid #e2e2e2;border-bottom:none"></div><svg style="left:2170px;top:105px;" width="200" height="40" viewBox="2170 105 200 40">
      <circle cx="2188.7" cy="118.4" r="2.8" fill="none" stroke="#505050" stroke-width="2"/>
      <circle cx="2199.2" cy="121.6" r="2.8" fill="none" stroke="#505050" stroke-width="2"/>
      <circle cx="2188.7" cy="135" r="2.8" fill="none" stroke="#505050" stroke-width="2"/>
      <path d="M2188.7 121.2 V132.2" stroke="#505050" stroke-width="2.2"/>
      <path d="M2199.2 124.4 V126 Q2199.2 128.3 2196.8 128.8 L2189 130.5" fill="none" stroke="#505050" stroke-width="2.2"/>
      <rect x="2249" y="117.5" width="24" height="17.6" rx="2" fill="#505050"/>
      <path d="M2254 118 L2256 114.4 H2266 L2268 118 Z" fill="#505050"/>
      <circle cx="2261" cy="126.2" r="4.4" fill="none" stroke="#f9f9f9" stroke-width="1.8"/>
      <path d="M2325 117.8 L2333.8 123.6 L2325 129.4 L2316.2 123.6 Z" fill="#505050"/>
      <path d="M2316.8 128.4 L2325 133.8 L2333.2 128.4" fill="none" stroke="#505050" stroke-width="2.2"/>
    </svg><div style="position:absolute;left:2168px;top:143px;width:390px;height:27px;background:#808080;border:1px solid #101010"></div><div style="position:absolute;left:2531px;top:143px;width:27px;height:27px;background:#4b7b47;border:1px solid #101010;border-left:1px solid #303030"></div><div style="position:absolute;left:2282.50px;top:146.92px;font-size:19px;line-height:19px;color:#f2f2f2;white-space:pre;transform:scaleX(1.0069);transform-origin:0 0;">Render settings</div><div style="position:absolute;left:2539.00px;top:146.92px;font-size:19px;line-height:19px;color:#f2f2f2;white-space:pre;transform:scaleX(0.9453);transform-origin:0 0;">?</div><div style="position:absolute;left:2168px;top:169px;width:390px;height:681px;border:1px solid #a9a9a9;border-top:none"></div><div style="position:absolute;left:2172px;top:185px;width:382px;height:237px;border:1px solid #dcdcdc;border-radius:2px"></div><div style="position:absolute;left:2179px;top:183px;width:152px;height:5px;background:#f0f0f0"></div><div style="position:absolute;left:2183.00px;top:175.72px;font-size:19px;line-height:19px;color:#000;white-space:pre;transform:scaleX(1.0159);transform-origin:0 0;">Rendering range</div><div style="position:absolute;left:2199.50px;top:205.72px;font-size:19px;line-height:19px;color:#000;white-space:pre;transform:scaleX(1.0031);transform-origin:0 0;">Single frame</div><div style="position:absolute;left:2199.50px;top:234.62px;font-size:19px;line-height:19px;color:#000;white-space:pre;transform:scaleX(1.0356);transform-origin:0 0;">Complete animation</div><div style="position:absolute;left:2199.50px;top:263.52px;font-size:19px;line-height:19px;color:#000;white-space:pre;transform:scaleX(0.9497);transform-origin:0 0;">Range:</div><div style="position:absolute;left:2210px;top:290px;width:140px;height:26px;background:#f0f0f0;border:1px solid #e6e6e6;border-radius:2px"></div><div style="position:absolute;left:2212.50px;top:293.22px;font-size:19px;line-height:19px;color:#000;white-space:pre;transform:scaleX(0.9926);transform-origin:0 0;">0</div><div style="position:absolute;left:2370.00px;top:293.22px;font-size:19px;line-height:19px;color:#000;white-space:pre;transform:scaleX(1.0215);transform-origin:0 0;">to</div><div style="position:absolute;left:2390px;top:290px;width:140px;height:26px;background:#f0f0f0;border:1px solid #e6e6e6;border-radius:2px"></div><div style="position:absolute;left:2393.20px;top:293.22px;font-size:19px;line-height:19px;color:#000;white-space:pre;transform:scaleX(0.9684);transform-origin:0 0;">100</div><div style="position:absolute;left:2177.80px;top:329.52px;font-size:19px;line-height:19px;color:#000;white-space:pre;transform:scaleX(0.9948);transform-origin:0 0;">Every Nth frame:</div><div style="position:absolute;left:2332px;top:326px;width:181px;height:26px;background:#f0f0f0;border:1px solid #e6e6e6;border-radius:2px"></div><div style="position:absolute;left:2335.50px;top:329.52px;font-size:19px;line-height:19px;color:#000;white-space:pre;transform:scaleX(0.8035);transform-origin:0 0;">1</div><div style="position:absolute;left:2177.80px;top:359.42px;font-size:19px;line-height:19px;color:#000;white-space:pre;transform:scaleX(0.9936);transform-origin:0 0;">File number base:</div><div style="position:absolute;left:2332px;top:356px;width:181px;height:26px;background:#f0f0f0;border:1px solid #e6e6e6;border-radius:2px"></div><div style="position:absolute;left:2334.20px;top:359.42px;font-size:19px;line-height:19px;color:#000;white-space:pre;transform:scaleX(0.9926);transform-origin:0 0;">0</div><div style="position:absolute;left:2178px;top:387px;width:370px;height:31px;background:#fdfdfd;border:1px solid #d4d4d4;border-radius:4px"></div><div style="position:absolute;left:2275.50px;top:392.82px;font-size:19px;line-height:19px;color:#000;white-space:pre;transform:scaleX(1.0193);transform-origin:0 0;">Animation settings...</div><div style="position:absolute;left:2172px;top:444px;width:382px;height:138px;border:1px solid #dcdcdc;border-radius:2px"></div><div style="position:absolute;left:2178px;top:442px;width:166px;height:5px;background:#f0f0f0"></div><div style="position:absolute;left:2182.20px;top:434.62px;font-size:19px;line-height:19px;color:#000;white-space:pre;transform:scaleX(1.0330);transform-origin:0 0;">Output image size</div><div style="position:absolute;left:2177.30px;top:465.52px;font-size:19px;line-height:19px;color:#000;white-space:pre;transform:scaleX(1.0472);transform-origin:0 0;">Width:</div><div style="position:absolute;left:2243px;top:462px;width:158px;height:27px;background:#ffffff;border:1px solid #ececec;border-bottom:1px solid #8a8a8a;border-radius:2px"></div><div style="position:absolute;left:2245.80px;top:465.52px;font-size:19px;line-height:19px;color:#000;white-space:pre;transform:scaleX(1.0146);transform-origin:0 0;">1600</div><div style="position:absolute;left:2402px;top:462px;width:15px;height:13px;background:#e3effa;border:1px solid #cde2f6;border-radius:2px"></div><div style="position:absolute;left:2402px;top:475px;width:15px;height:13px;background:#e3effa;border:1px solid #cde2f6;border-radius:2px"></div><div style="position:absolute;left:2419px;top:462px;width:130px;height:27px;background:#fdfdfd;border:1px solid #e0e0e0;border-bottom-color:#c8c8c8;border-radius:3px"></div><div style="position:absolute;left:2423.30px;top:465.52px;font-size:19px;line-height:19px;color:#000;white-space:pre;transform:scaleX(0.8997);transform-origin:0 0;">Presets...</div><div style="position:absolute;left:2177.30px;top:495.72px;font-size:19px;line-height:19px;color:#000;white-space:pre;transform:scaleX(1.0415);transform-origin:0 0;">Height:</div><div style="position:absolute;left:2243px;top:492px;width:158px;height:27px;background:#ffffff;border:1px solid #ececec;border-bottom:1px solid #8a8a8a;border-radius:2px"></div><div style="position:absolute;left:2245.80px;top:495.72px;font-size:19px;line-height:19px;color:#000;white-space:pre;transform:scaleX(1.0146);transform-origin:0 0;">1200</div><div style="position:absolute;left:2402px;top:492px;width:15px;height:13px;background:#e3effa;border:1px solid #cde2f6;border-radius:2px"></div><div style="position:absolute;left:2402px;top:505px;width:15px;height:13px;background:#e3effa;border:1px solid #cde2f6;border-radius:2px"></div><div style="position:absolute;left:2177px;top:530.5px;width:13px;height:13px;background:#fff;border:1px solid #333;border-radius:2px"></div><div style="position:absolute;left:2199.00px;top:526.82px;font-size:19px;line-height:19px;color:#000;white-space:pre;transform:scaleX(1.0035);transform-origin:0 0;">Preview visible region</div><div style="position:absolute;left:2177px;top:559.5px;width:13px;height:13px;background:#f8f8f8;border:1px solid #cfcfcf;border-radius:2px"></div><div style="position:absolute;left:2199.00px;top:555.72px;font-size:19px;line-height:19px;color:#000;white-space:pre;transform:scaleX(0.9905);transform-origin:0 0;">Render all viewports (OVITO Pro)</div><div style="position:absolute;left:2172px;top:604px;width:382px;height:84px;border:1px solid #dcdcdc;border-radius:2px"></div><div style="position:absolute;left:2178px;top:602px;width:132px;height:5px;background:#f0f0f0"></div><div style="position:absolute;left:2182.90px;top:594.62px;font-size:19px;line-height:19px;color:#000;white-space:pre;transform:scaleX(1.0330);transform-origin:0 0;">Render output</div><div style="position:absolute;left:2177px;top:631px;width:13px;height:13px;background:#0a5bc4;border-radius:2px"></div><div style="position:absolute;left:2198.20px;top:627.72px;font-size:19px;line-height:19px;color:#000;white-space:pre;transform:scaleX(0.9830);transform-origin:0 0;">Save to file</div><div style="position:absolute;left:2438px;top:623px;width:110px;height:31px;background:#fdfdfd;border:1px solid #d4d4d4;border-radius:4px"></div><div style="position:absolute;left:2455.10px;top:628.32px;font-size:19px;line-height:19px;color:#000;white-space:pre;transform:scaleX(0.9210);transform-origin:0 0;">Choose...</div><div style="position:absolute;left:2178px;top:658px;width:370px;height:26px;background:#f0f0f0;border:1px solid #e6e6e6;border-radius:2px"></div><div style="position:absolute;left:2178.20px;top:661.72px;font-size:19px;line-height:19px;color:#000;white-space:pre;transform:scaleX(1.0354);transform-origin:0 0;">'Users/feilong/OneDrive/</div><div style="position:absolute;left:2429.00px;top:661.72px;font-size:19px;line-height:19px;color:#000;white-space:pre;transform:scaleX(1.0384);transform-origin:0 0;">/0 0 12 0.png</div><div style="position:absolute;left:2172px;top:710.5px;width:382px;height:83px;border:1px solid #dcdcdc;border-radius:2px"></div><div style="position:absolute;left:2178px;top:708.5px;width:110px;height:5px;background:#f0f0f0"></div><div style="position:absolute;left:2182.50px;top:700.82px;font-size:19px;line-height:19px;color:#000;white-space:pre;transform:scaleX(1.0098);transform-origin:0 0;">Background</div><div style="position:absolute;left:2199.00px;top:733.92px;font-size:19px;line-height:19px;color:#000;white-space:pre;transform:scaleX(0.9864);transform-origin:0 0;">Color:</div><div style="position:absolute;left:2302px;top:727px;width:247px;height:34px;background:#fff;border:1px solid #adadad"></div><div style="position:absolute;left:2199.00px;top:766.82px;font-size:19px;line-height:19px;color:#000;white-space:pre;transform:scaleX(0.9857);transform-origin:0 0;">Transparent</div><div style="position:absolute;left:2177px;top:809px;width:212px;height:33px;background:#fdfdfd;border:1px solid #d4d4d4;border-radius:4px"></div><div style="position:absolute;left:2395px;top:809px;width:154px;height:33px;background:#fdfdfd;border:1px solid #d4d4d4;border-radius:4px"></div><div style="position:absolute;left:2197.80px;top:815.42px;font-size:19px;line-height:19px;color:#000;white-space:pre;">Render active viewpor</div><div style="position:absolute;left:2399.00px;top:815.42px;font-size:19px;line-height:19px;color:#000;white-space:pre;transform:scaleX(0.9781);transform-origin:0 0;">Switch renderer...</div><div style="position:absolute;left:2168px;top:853px;width:390px;height:27px;background:#808080;border:1px solid #101010"></div><div style="position:absolute;left:2531px;top:853px;width:27px;height:27px;background:#4b7b47;border:1px solid #101010;border-left:1px solid #303030"></div><div style="position:absolute;left:2238.55px;top:856.22px;font-size:19px;line-height:19px;color:#f2f2f2;white-space:pre;transform:scaleX(1.0133);transform-origin:0 0;">OpenGL renderer settings</div><div style="position:absolute;left:2539.00px;top:856.22px;font-size:19px;line-height:19px;color:#f2f2f2;white-space:pre;transform:scaleX(0.9453);transform-origin:0 0;">?</div><div style="position:absolute;left:2168px;top:879px;width:390px;height:37px;border:1px solid #a9a9a9;border-top:none"></div><div style="position:absolute;left:2172.60px;top:888.32px;font-size:19px;line-height:19px;color:#000;white-space:pre;transform:scaleX(1.0135);transform-origin:0 0;">Antialiasing level:</div><div style="position:absolute;left:2325px;top:885px;width:212px;height:27px;background:#ffffff;border:1px solid #ececec;border-bottom:1px solid #8a8a8a;border-radius:2px"></div><div style="position:absolute;left:2327.20px;top:888.32px;font-size:19px;line-height:19px;color:#000;white-space:pre;transform:scaleX(0.9926);transform-origin:0 0;">6</div><div style="position:absolute;left:2538px;top:885px;width:16px;height:13px;background:#e3effa;border:1px solid #cde2f6;border-radius:2px"></div><div style="position:absolute;left:2538px;top:898px;width:16px;height:13px;background:#e3effa;border:1px solid #cde2f6;border-radius:2px"></div><svg style="left:2160px;top:180px;" width="400" height="760" viewBox="2160 180 400 760"><circle cx="2183.4" cy="215.5" r="6.3" fill="#0a5bc4"/><circle cx="2183.4" cy="215.5" r="2.6" fill="#fff"/><circle cx="2183.4" cy="244.4" r="5.9" fill="#f7f7f7" stroke="#8a8a8a" stroke-width="1"/><circle cx="2183.4" cy="273.3" r="5.9" fill="#f7f7f7" stroke="#8a8a8a" stroke-width="1"/><path d="M2354.3 298.8 L2359.3 293.8 L2364.3 298.8 Z" fill="#000"/><path d="M2354.3 307.2 L2359.3 312.2 L2364.3 307.2 Z" fill="#000"/><path d="M2534.6 298.8 L2539.6 293.8 L2544.6 298.8 Z" fill="#000"/><path d="M2534.6 307.2 L2539.6 312.2 L2544.6 307.2 Z" fill="#000"/><path d="M2517.7 334.6 L2522.7 329.6 L2527.7 334.6 Z" fill="#000"/><path d="M2517.7 343.0 L2522.7 348.0 L2527.7 343.0 Z" fill="#000"/><path d="M2517.7 364.6 L2522.7 359.6 L2527.7 364.6 Z" fill="#000"/><path d="M2517.7 373.0 L2522.7 378.0 L2527.7 373.0 Z" fill="#000"/><path d="M2404.8 470.8 L2409.3 465.8 L2413.8 470.8 Z" fill="#000"/><path d="M2404.8 478.8 L2409.3 483.8 L2413.8 478.8 Z" fill="#000"/><path d="M2530.2 472 L2535.3 477.6 L2540.4 472" fill="none" stroke="#333" stroke-width="1.2"/><path d="M2404.8 500.8 L2409.3 495.8 L2413.8 500.8 Z" fill="#000"/><path d="M2404.8 508.8 L2409.3 513.8 L2413.8 508.8 Z" fill="#000"/><path d="M2180.5 637.8 L2182.8 640 L2186.8 635.2" fill="none" stroke="#fff" stroke-width="1.1"/><g fill="none" stroke="#000" stroke-width="1.15">
      <path d="M2400.7 663 V666.5 M2400.7 664.4 H2408.8"/>
      <path d="M2394.9 666.6 H2406.3 M2395 668.9 H2406.3 M2395 671.4 H2406.3 M2394.9 666.2 V673 M2406.3 666.2 V673"/>
      <path d="M2392.3 674.6 H2409.6 M2400.9 671.5 V680.2 M2400.6 675.2 L2392.4 678.9 M2401.2 675.2 L2409.6 678.9"/>
      <path d="M2410.5 664.5 H2427.9 M2418.6 664.8 L2417.3 668.4"/>
      <path d="M2412.1 668.7 H2426.1 V679.4 M2412.1 668.2 V679.4 M2411.8 678.6 H2426.4 M2416.7 668.7 V678.6 M2421.8 668.7 V678.6 M2416.7 671.5 H2421.8 M2416.7 675.5 H2421.8"/>
    </g><circle cx="2183.4" cy="743.5" r="5.9" fill="#f7f7f7" stroke="#8a8a8a" stroke-width="1"/><circle cx="2183.4" cy="776.5" r="6.3" fill="#0a5bc4"/><circle cx="2183.4" cy="776.5" r="2.6" fill="#fff"/><rect x="2176" y="818.6" width="17" height="15.2" rx="1.5" fill="#505050"/>
      <path d="M2179.2 819 L2181 815.9 H2188.5 L2190.2 819 Z" fill="#505050"/>
      <circle cx="2184.5" cy="826" r="3.3" fill="none" stroke="#fdfdfd" stroke-width="1.4"/><path d="M2541.3 893.8 L2545.8 888.8 L2550.3 893.8 Z" fill="#000"/><path d="M2541.3 901.8 L2545.8 906.8 L2550.3 901.8 Z" fill="#000"/></svg><div style="position:absolute;left:813px;top:1309px;width:108px;height:30px;background:#f9f9f9;border:1px solid #e8e8e8"></div><div style="position:absolute;left:921px;top:1311px;width:87px;height:28px;background:#f0f0f0;border:1px solid #e4e4e4;border-left:none"></div><div style="position:absolute;left:1008px;top:1311px;width:184px;height:28px;background:#f0f0f0;border:1px solid #e4e4e4;border-left:none"></div><div style="position:absolute;left:1192px;top:1311px;width:105px;height:28px;background:#f0f0f0;border:1px solid #e4e4e4;border-left:none"></div><div style="position:absolute;left:0px;top:1346px;width:2160px;height:1px;background:#a6a6a6"></div><div style="position:absolute;left:830.60px;top:1313.62px;font-size:19px;line-height:19px;color:#000;white-space:pre;transform:scaleX(0.9786);transform-origin:0 0;">Particles</div><div style="position:absolute;left:938.60px;top:1315.72px;font-size:19px;line-height:19px;color:#000;white-space:pre;transform:scaleX(0.9708);transform-origin:0 0;">Bonds</div><div style="position:absolute;left:1027.20px;top:1315.72px;font-size:19px;line-height:19px;color:#000;white-space:pre;transform:scaleX(1.0558);transform-origin:0 0;">Global Attributes</div><div style="position:absolute;left:1211.30px;top:1315.72px;font-size:19px;line-height:19px;color:#000;white-space:pre;transform:scaleX(0.9375);transform-origin:0 0;">Surfaces</div><div style="position:absolute;left:1785px;top:1348px;width:1px;height:92px;background:#a6a6a6"></div><div style="position:absolute;left:2025px;top:1348px;width:1px;height:92px;background:#a6a6a6"></div><div style="position:absolute;left:1836px;top:1354px;width:1px;height:36px;background:#cfcfcf"></div><div style="position:absolute;left:1974px;top:1354px;width:1px;height:36px;background:#cfcfcf"></div><div style="position:absolute;left:1833px;top:1404px;width:129px;height:26px;background:#f0f0f0;border:1px solid #e6e6e6;border-radius:2px"></div><div style="position:absolute;left:1835.30px;top:1407.32px;font-size:19px;line-height:19px;color:#000;white-space:pre;transform:scaleX(0.9926);transform-origin:0 0;">0</div><div style="position:absolute;left:2115px;top:1397px;width:43px;height:40px;background:#cce8ff;border:1px solid #99d1ff;border-radius:3px"></div><svg style="left:1780px;top:1310px;" width="380" height="130" viewBox="1780 1310 380 130">
      <path d="M2138.5 1326 L2144 1320 L2149.5 1326" fill="none" stroke="#333" stroke-width="1.4"/>
      <!-- first -->
      <rect x="1801" y="1363" width="3.2" height="18" fill="#8c8c8c"/>
      <path d="M1819.2 1363 V1381 L1806 1372 Z" fill="#8c8c8c"/>
      <!-- rewind -->
      <path d="M1861.2 1363 V1381 L1848.2 1372 Z M1874 1363 V1381 L1861 1372 Z" fill="#8c8c8c"/>
      <!-- play -->
      <path d="M1899 1362 V1382 L1915.2 1372 Z" fill="#8c8c8c"/>
      <!-- ff -->
      <path d="M1935.6 1363 V1381 L1948.6 1372 Z M1948.4 1363 V1381 L1961.8 1372 Z" fill="#8c8c8c"/>
      <!-- last -->
      <path d="M1990.8 1363 V1381 L2004 1372 Z" fill="#8c8c8c"/>
      <rect x="2005.8" y="1363" width="3.2" height="18" fill="#8c8c8c"/>
      <!-- zoom -->
      <circle cx="2045.6" cy="1368.2" r="8.3" fill="none" stroke="#505050" stroke-width="2.6"/>
      <line x1="2051.6" y1="1374.2" x2="2062" y2="1384" stroke="#505050" stroke-width="3"/>
      <!-- hand -->
      <g fill="#505050">
        <rect x="2084.6" y="1361.5" width="3.6" height="14" rx="1.8"/>
        <rect x="2089" y="1358.2" width="3.6" height="16" rx="1.8"/>
        <rect x="2093.4" y="1359.4" width="3.6" height="15" rx="1.8"/>
        <rect x="2097.8" y="1362.4" width="3.6" height="12" rx="1.8"/>
        <path d="M2084.6 1372 H2101.4 V1378 Q2101.4 1386 2094 1386.3 H2091 Q2087.5 1386.3 2085.5 1383 L2080.3 1375.5 Q2079.6 1373.2 2081.8 1373 Q2083 1373 2084.6 1375 Z"/>
      </g>
      <!-- orbit eye -->
      <ellipse cx="2136" cy="1370.5" rx="16" ry="7.8" fill="none" stroke="#505050" stroke-width="1.8"/>
      <circle cx="2136.5" cy="1370.8" r="4.4" fill="#505050"/>
      <path d="M2127 1361.5 L2131.5 1363.5 L2127.5 1366 Z M2145 1375.5 L2141 1377.5 L2145 1380 Z" fill="#505050"/>
      <!-- key -->
      <circle cx="1803.8" cy="1417" r="7" fill="#8c8c8c"/>
      <circle cx="1803.5" cy="1417" r="2.6" fill="#f0f0f0"/>
      <rect x="1808" y="1414.3" width="15" height="5.2" fill="#8c8c8c"/>
      <rect x="1815.8" y="1417" width="4.4" height="7" fill="#8c8c8c"/>
      <!-- spinner -->
      <path d="M1966.8 1412.4 L1971.6 1407.2 L1976.4 1412.4 Z M1966.8 1421.6 L1971.6 1426.9 L1976.4 1421.6 Z" fill="#000"/>
      <!-- clock -->
      <circle cx="2000" cy="1416.8" r="11" fill="none" stroke="#505050" stroke-width="2"/>
      <path d="M1999.4 1410.5 V1418 L2005 1421" fill="none" stroke="#505050" stroke-width="2"/>
      <!-- cube with brackets -->
      <path d="M2034.5 1408 V1401.5 H2040.5 M2059.5 1401.5 H2065.5 V1408 M2034.5 1426 V1432.5 H2040.5 M2059.5 1432.5 H2065.5 V1426" fill="none" stroke="#505050" stroke-width="1.6"/>
      <path d="M2050 1405.5 L2062.8 1410.5 V1424 L2050 1429.5 L2037 1424 V1410.5 Z" fill="#505050"/>
      <path d="M2039.5 1411 L2050 1415.2 L2060.5 1411" fill="none" stroke="#f0f0f0" stroke-width="1.3"/>
      <path d="M2050 1415.2 V1427" stroke="#f0f0f0" stroke-width="0"/>
      <rect x="2051.5" y="1416.5" width="9.8" height="7.8" fill="#f0f0f0" transform="skewY(-22) translate(0 830)"/>
      <!-- fov -->
      <path d="M2082 1404 L2104.5 1416.5 L2082 1429.5" fill="none" stroke="#505050" stroke-width="2"/>
      <path d="M2091.5 1409.5 Q2087.5 1416.5 2091.5 1423.5" fill="none" stroke="#505050" stroke-width="1.6"/>
      <!-- maximize arrows -->
      <g stroke="#505050" stroke-width="2.4" fill="none">
        <path d="M2125 1406.5 L2132.5 1414"/><path d="M2147.5 1406.5 L2140 1414"/>
        <path d="M2125 1427 L2132.5 1419.5"/><path d="M2147.5 1427 L2140 1419.5"/>
      </g>
      <g fill="#505050">
        <path d="M2123.3 1404.8 H2131 L2123.3 1412.5 Z"/><path d="M2149.2 1404.8 H2141.5 L2149.2 1412.5 Z"/>
        <path d="M2123.3 1428.7 H2131 L2123.3 1421 Z"/><path d="M2149.2 1428.7 H2141.5 L2149.2 1421 Z"/>
      </g>
    </svg><svg style="left:1780px;top:660px;" width="390" height="320" viewBox="1780 660 390 320">
      <path d="M1978.1 711.8 L2129.4 813.6 L2120.2 816.1 L2144.8 819.6 L2131.7 798.5 L2133.1 807.9 L1978.7 710.8 Z" fill="#f83a3a"/>
      <path d="M2008.8 950.5 L1819.9 845.9 L1828.8 842.6 L1804.0 841.2 L1818.9 861.1 L1816.7 851.9 L2008.2 951.5 Z" fill="#f83a3a"/>
      <circle cx="1962.9" cy="700.8" r="15" fill="#f83a3a"/>
      <circle cx="2024.7" cy="952.7" r="15" fill="#f83a3a"/>
      <text x="1962.9" y="708.5" text-anchor="middle" font-family="Liberation Sans" font-size="21" fill="#fff">1</text>
      <text x="2024.7" y="960.4" text-anchor="middle" font-family="Liberation Sans" font-size="21" fill="#fff">2</text>
    </svg><div style="position:absolute;left:2157px;top:796px;width:241px;height:61px;border:7px solid #fc3a3a"></div>
</body></html>
